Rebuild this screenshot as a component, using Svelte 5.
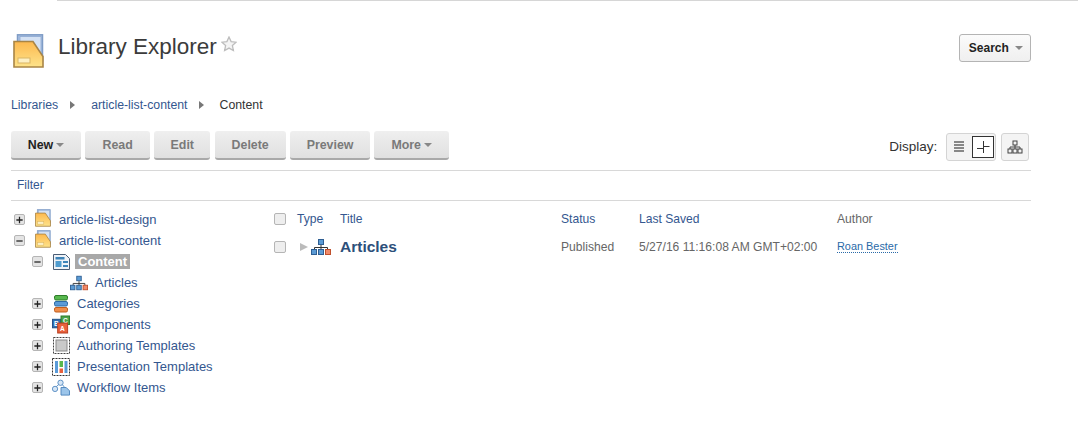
<script>
  const buttons = [
    { label: 'New', caret: true, active: true, width: 70 },
    { label: 'Read', width: 64.5 },
    { label: 'Edit', width: 56 },
    { label: 'Delete', width: 71 },
    { label: 'Preview', width: 80 },
    { label: 'More', caret: true, width: 74.5 }
  ];

  const tree = [
    { label: 'article-list-design', depth: 0, toggle: '+', icon: 'library' },
    { label: 'article-list-content', depth: 0, toggle: '-', icon: 'library' },
    { label: 'Content', depth: 1, toggle: '-', icon: 'content', selected: true },
    { label: 'Articles', depth: 2, icon: 'site' },
    { label: 'Categories', depth: 1, toggle: '+', icon: 'categories' },
    { label: 'Components', depth: 1, toggle: '+', icon: 'components' },
    { label: 'Authoring Templates', depth: 1, toggle: '+', icon: 'authoring' },
    { label: 'Presentation Templates', depth: 1, toggle: '+', icon: 'presentation' },
    { label: 'Workflow Items', depth: 1, toggle: '+', icon: 'workflow' }
  ];
</script>

{#snippet siteIcon()}
  <svg class="icon" viewBox="0 0 20 16" width="20" height="16">
    <rect x="7.5" y="0.5" width="5" height="5" fill="#5b9bd5" stroke="#2f5f93" />
    <path d="M10 6v3M3.5 11V8.5h13V11M10 8.5V11" fill="none" stroke="#333" />
    <rect x="0.5" y="10.5" width="5" height="5" fill="#5b9bd5" stroke="#2f5f93" />
    <rect x="7.5" y="10.5" width="5" height="5" fill="#5b9bd5" stroke="#2f5f93" />
    <rect x="14.5" y="10.5" width="5" height="5" fill="#f08a6a" stroke="#c0502d" />
  </svg>
{/snippet}

{#snippet libraryIcon(w, h)}
  <svg viewBox="0 0 31 34" width={w} height={h}>
    <rect x="4.5" y="0.8" width="25" height="26" fill="#a9c0e2" stroke="#7f9cc6" stroke-width="1.5" />
    <rect x="7" y="2.5" width="21" height="24" fill="#d5e2f4" stroke="#8eaad2" stroke-width="0.8" />
    <path d="M1 7.5h19l10 15v10.5H1z" fill="url(#libFill)" stroke="#a98546" stroke-width="1.6" />
    <rect x="5" y="24" width="12" height="5" fill="#fdf0c4" stroke="#d9b565" />
  </svg>
{/snippet}

{#snippet treeIcon(name)}
  {#if name === 'library'}
    <span class="icon">{@render libraryIcon(16, 18)}</span>
  {:else if name === 'site'}
    {@render siteIcon()}
  {:else if name === 'content'}
    <svg class="icon" viewBox="0 0 17 16" width="17" height="16">
      <path d="M.5.5h12l4 4v11H.5z" fill="#eef2f7" stroke="#4a5d75" />
      <rect x="2.5" y="3" width="9" height="2.5" fill="#3d83b8" />
      <rect x="2.5" y="7" width="6" height="6" fill="#4f9ccf" />
      <rect x="10" y="7" width="5" height="2" fill="#3d83b8" />
      <rect x="10" y="11" width="5" height="2" fill="#3d83b8" />
    </svg>
  {:else if name === 'categories'}
    <svg class="icon" viewBox="0 0 14 18" width="14" height="18">
      <rect x="0.5" y="0.5" width="13" height="4.5" rx="1.5" fill="#58b84e" stroke="#2f7d2a" />
      <rect x="0.5" y="6.5" width="13" height="4.5" rx="1.5" fill="#5a9bd8" stroke="#2e6ba5" />
      <rect x="0.5" y="12.5" width="13" height="4.5" rx="1.5" fill="#ef8d4a" stroke="#c05e1e" />
    </svg>
  {:else if name === 'components'}
    <svg class="icon" viewBox="0 0 19 19" width="19" height="19">
      <rect x="0.5" y="4" width="9" height="9" fill="#2f6fb3" stroke="#1f4f85" />
      <text x="2" y="11" class="block-letter">B</text>
      <rect x="9.5" y="0.5" width="9" height="9" fill="#4ba34a" stroke="#2c7a2c" />
      <text x="11.5" y="7.5" class="block-letter">C</text>
      <rect x="6" y="8" width="10.5" height="10.5" fill="#e8603c" stroke="#b63d1d" />
      <text x="8.5" y="16.5" class="block-letter">A</text>
    </svg>
  {:else if name === 'authoring'}
    <svg class="icon" viewBox="0 0 17 17" width="17" height="17">
      <rect x="0.5" y="0.5" width="16" height="16" fill="#fff" stroke="#444" stroke-dasharray="2 1" />
      <rect x="3" y="3" width="11" height="11" fill="#c9c9c9" stroke="#8a8a8a" />
    </svg>
  {:else if name === 'presentation'}
    <svg class="icon" viewBox="0 0 18 18" width="18" height="18">
      <rect x="0.5" y="0.5" width="17" height="17" fill="#fff" stroke="#333" stroke-dasharray="2 1" />
      <rect x="3" y="3" width="3" height="12" fill="#5a9bd8" />
      <rect x="7.5" y="3" width="3.5" height="6" fill="#58b84e" />
      <rect x="7.5" y="10.5" width="3.5" height="4.5" fill="#e8603c" />
      <rect x="12.5" y="3" width="3" height="12" fill="#5a9bd8" />
    </svg>
  {:else}
    <svg class="icon" viewBox="0 0 19 17" width="19" height="17">
      <circle cx="9" cy="3.5" r="2.8" fill="#d6e6f6" stroke="#5a8fc4" />
      <circle cx="3.2" cy="10" r="2.8" fill="#d6e6f6" stroke="#5a8fc4" />
      <path d="M7 5.5 4.5 7.6M11 5.5l2 2.5" stroke="#5a8fc4" fill="none" />
      <path d="M9.5 8.5h5.5l3.5 3.5v4.5h-9z" fill="#9cc5ea" stroke="#4f86bd" />
    </svg>
  {/if}
{/snippet}

<svg class="defs" width="0" height="0" aria-hidden="true">
  <defs>
    <linearGradient id="libFill" x1="0" y1="0" x2="0" y2="1">
      <stop offset="0" stop-color="#fdb94f" />
      <stop offset="1" stop-color="#fde38a" />
    </linearGradient>
  </defs>
</svg>

<div class="page">
  <div class="topline"></div>

  <header class="head">
    <span class="head-icon">{@render libraryIcon(31, 34)}</span>
    <h1>Library Explorer</h1>
    <svg class="star" viewBox="0 0 16 16" width="16" height="16">
      <path d="M8 1l2.1 4.6 5 .6-3.7 3.4 1 5L8 12.1 3.6 14.6l1-5L.9 6.2l5-.6z" fill="#f4f4f4" stroke="#bdbdbd" stroke-width="1.3" />
    </svg>
    <button class="search">Search <i class="caret"></i></button>
  </header>

  <nav class="crumbs">
    <a class="first" href="#libraries">Libraries</a>
    <i class="sep"></i>
    <a href="#library">article-list-content</a>
    <i class="sep"></i>
    <span>Content</span>
  </nav>

  <div class="toolbar">
    {#each buttons as b}
      <button class="action" class:active={b.active} style="width: {b.width}px">
        {b.label}{#if b.caret}<i class="caret"></i>{/if}
      </button>
    {/each}
    <span class="display">Display:</span>
    <div class="view-group">
      <span class="view-list">
        <svg viewBox="0 0 12 14" width="12" height="14">
          <path d="M1 2h10M1 5h10M1 8h10M1 11h10" stroke="#888" stroke-width="2" />
        </svg>
      </span>
      <span class="view-active">
        <svg viewBox="0 0 14 14" width="14" height="14">
          <path d="M7.5 1v12M1 8.5h6.5M7.5 6.5h6" fill="none" stroke="#333" stroke-width="1" />
        </svg>
      </span>
    </div>
    <span class="view-tree">
      <svg viewBox="0 0 16 14" width="16" height="14">
        <rect x="6" y="1" width="4" height="4" fill="none" stroke="#444" />
        <path d="M8 5v2M3 9V7h10v2M8 7v2" fill="none" stroke="#444" />
        <rect x="1" y="9" width="4" height="4" fill="none" stroke="#444" />
        <rect x="6" y="9" width="4" height="4" fill="none" stroke="#444" />
        <rect x="11" y="9" width="4" height="4" fill="none" stroke="#444" />
      </svg>
    </span>
  </div>

  <div class="filter"><a href="#filter">Filter</a></div>

  <div class="main">
    <ul class="tree">
      {#each tree as row}
        <li class="d{row.depth}">
          <span class="tog">
            {#if row.toggle}
              <svg viewBox="0 0 10 10" width="10" height="10">
                <path d={row.toggle === '+' ? 'M1.5 5h7M5 1.5v7' : 'M1.5 5h7'} stroke="#222" stroke-width="1.4" />
              </svg>
            {/if}
          </span>
          <span class="tree-icon">{@render treeIcon(row.icon)}</span>
          <a href="#row" class:selected={row.selected}>{row.label}</a>
        </li>
      {/each}
    </ul>

    <div class="table">
      <span class="check"></span>
      <a class="col-type" href="#type">Type</a>
      <a href="#title">Title</a>
      <a href="#status">Status</a>
      <a href="#saved">Last Saved</a>
      <span class="muted">Author</span>

      <span class="check"></span>
      <span class="type-cell">
        <i class="expand"></i>
        {@render siteIcon()}
      </span>
      <a class="item-title" href="#articles">Articles</a>
      <span class="muted">Published</span>
      <span class="muted">5/27/16 11:16:08 AM GMT+02:00</span>
      <a class="author" href="#author">Roan Bester</a>
    </div>
  </div>
</div>

<style>
  :global(body) {
    margin: 0;
    background: #fff;
    font-family: "Liberation Sans", Arial, sans-serif;
    font-size: 12px;
    color: #333;
  }

  a {
    color: #34578f;
    text-decoration: none;
  }

  .defs {
    position: absolute;
  }

  .page {
    width: 1078px;
    height: 428px;
    overflow: hidden;
    box-sizing: border-box;
    padding-right: 47px;
  }

  .topline {
    height: 1px;
    margin: 0 -47px 0 57px;
    background: #d6d6d6;
  }

  .head {
    display: flex;
    align-items: flex-start;
    margin: 33px 0 0 13px;
    height: 42px;
  }

  .head-icon {
    display: block;
    height: 34px;
  }

  h1 {
    margin: -1px 0 0 14px;
    font-size: 22.5px;
    font-weight: normal;
    line-height: 27px;
    color: #3b3b3b;
  }

  .star {
    margin: 2px 0 0 4px;
  }

  .search {
    margin: 0 0 0 auto;
    width: 72px;
    height: 28px;
    padding: 0 0 0 2px;
    border: 1px solid #b4b4b4;
    border-radius: 3px;
    background: linear-gradient(#fbfbfb, #efefef);
    font: bold 12px "Liberation Sans", Arial, sans-serif;
    color: #222;
  }

  .caret {
    display: inline-block;
    width: 0;
    height: 0;
    margin-left: 3px;
    vertical-align: 2px;
    border: 4px solid transparent;
    border-top-color: #888;
    border-bottom: 0;
  }

  .crumbs {
    display: flex;
    align-items: center;
    height: 16px;
    margin: 21px 0 0 11px;
    font-size: 12.3px;
    color: #333;
  }

  .crumbs .first {
    margin-right: 1px;
  }

  .sep {
    width: 0;
    height: 0;
    margin: 0 16px 0 11px;
    border: 4px solid transparent;
    border-left: 5px solid #777;
    border-right: 0;
  }

  .toolbar {
    display: flex;
    align-items: flex-start;
    gap: 4.4px;
    height: 29px;
    margin: 18px 0 0 11px;
    padding-bottom: 10px;
    border-bottom: 1px solid #d8d8d8;
  }

  .action {
    height: 29px;
    padding: 0;
    border: 0;
    border-radius: 3px;
    border-bottom: 2px solid #a9a9a9;
    background: linear-gradient(#efefef, #e0e0e0);
    font: bold 12.4px "Liberation Sans", Arial, sans-serif;
    color: #7a7a7a;
  }

  .action.active {
    color: #222;
  }

  .display {
    margin: 2px 4px 0 auto;
    font-size: 13.5px;
    line-height: 28px;
    color: #333;
  }

  .view-group,
  .view-tree {
    display: flex;
    align-items: center;
    box-sizing: border-box;
    height: 28px;
    margin-top: 2px;
    border: 1px solid #d4d4d4;
    border-radius: 3px;
    background: #f4f4f4;
  }

  .view-group {
    width: 50px;
  }

  .view-tree {
    justify-content: center;
    width: 28px;
    margin-left: 1px;
    margin-right: 2px;
  }

  .view-list {
    display: flex;
    justify-content: center;
    width: 25px;
  }

  .view-active {
    display: flex;
    align-items: center;
    justify-content: center;
    box-sizing: border-box;
    width: 22px;
    height: 22px;
    border: 1px solid #333;
    background: #fff;
  }

  .filter {
    display: flex;
    align-items: center;
    height: 30px;
    padding-bottom: 2px;
    box-sizing: border-box;
    margin-left: 11px;
    padding-left: 6px;
    border-bottom: 1px solid #d8d8d8;
  }

  .main {
    display: flex;
    margin-left: 11px;
  }

  .tree {
    width: 263px;
    margin: 8px 0 0;
    padding: 0;
    list-style: none;
    flex: none;
  }

  .tree li {
    display: flex;
    align-items: center;
    height: 21px;
    font-size: 13px;
  }

  .tree li.d0 {
    padding-left: 3px;
  }

  .tree li.d1 {
    padding-left: 21px;
  }

  .tree li.d2 {
    padding-left: 39px;
  }

  .tog {
    display: flex;
    align-items: center;
    justify-content: center;
    box-sizing: border-box;
    width: 11px;
    height: 11px;
    margin-right: 9px;
    border: 1px solid #b5b5b5;
    border-radius: 2px;
    background: #e4e4e4;
  }

  .tree li.d2 .tog {
    visibility: hidden;
  }

  .tree-icon {
    display: flex;
    align-items: center;
    justify-content: center;
    width: 18px;
    height: 18px;
    margin-right: 7px;
  }

  .icon {
    display: block;
  }

  .block-letter {
    font: bold 7px "Liberation Sans", Arial, sans-serif;
    fill: #fff;
  }

  .selected {
    padding: 0 3px;
    margin-left: -2px;
    background: #a8a8a8;
    color: #fff;
    font-weight: bold;
  }

  .table {
    display: grid;
    grid-template-columns: 23px 43px 221px 78px 198px auto;
    grid-auto-rows: 21px;
    align-items: center;
    margin: 7px 0 0;
    justify-content: start;
    row-gap: 7px;
    font-size: 12.1px;
  }

  .check {
    box-sizing: border-box;
    width: 12px;
    height: 12px;
    border: 1px solid #b5b5b5;
    border-radius: 2px;
    background: #eee;
  }

  .muted {
    color: #666;
  }

  .type-cell {
    display: flex;
    align-items: center;
    gap: 3px;
    padding-left: 3px;
  }

  .expand {
    width: 0;
    height: 0;
    border: 4px solid transparent;
    border-left: 8px solid #bbb;
    border-right: 0;
  }

  .item-title {
    font-size: 15.5px;
    font-weight: bold;
    color: #2d4f7a;
  }

  .author {
    justify-self: start;
    font-size: 10.9px;
    color: #2a6aa8;
    border-bottom: 1px dotted #2a6aa8;
  }
</style>
